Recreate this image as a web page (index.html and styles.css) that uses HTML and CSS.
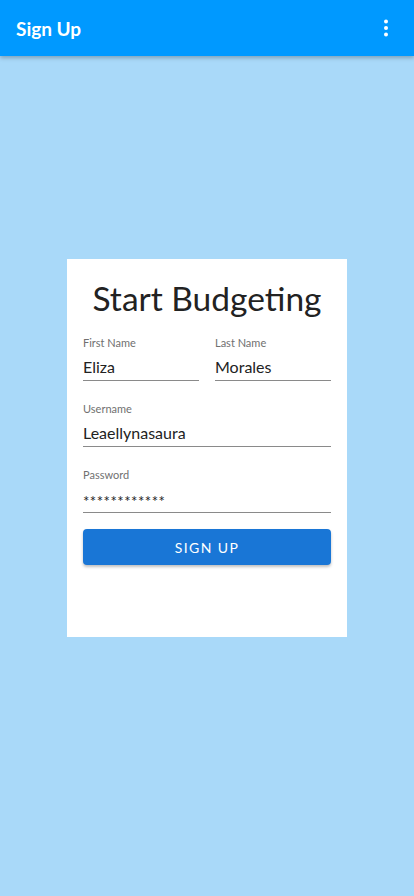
FILE: index.html
```html
<!DOCTYPE html>
<html>
<head>
<meta charset="utf-8">
<link rel="stylesheet" href="styles.css">
</head>
<body>
<header class="appbar">
  <h1 class="appbar-title">Sign Up</h1>
  <button class="menu-btn" aria-label="More">
    <svg width="24" height="24" viewBox="0 0 24 24"><circle cx="12" cy="5.5" r="2" fill="#fff"/><circle cx="12" cy="12" r="2" fill="#fff"/><circle cx="12" cy="18.5" r="2" fill="#fff"/></svg>
  </button>
</header>
<main class="content">
  <form class="card">
    <h2 class="card-title">Start Budgeting</h2>
    <div class="row">
      <label class="field">
        <span class="label">First Name</span>
        <span class="value">Eliza</span>
      </label>
      <label class="field">
        <span class="label">Last Name</span>
        <span class="value">Morales</span>
      </label>
    </div>
    <label class="field">
      <span class="label">Username</span>
      <span class="value">Leaellynasaura</span>
    </label>
    <label class="field">
      <span class="label">Password</span>
      <span class="value password">************</span>
    </label>
    <button type="button" class="submit">SIGN UP</button>
  </form>
</main>
</body>
</html>
```

FILE: styles.css
```css
* { box-sizing: border-box; }
html, body { margin: 0; padding: 0; }
body {
  width: 414px;
  height: 896px;
  background: #a9d9f9;
  font-family: Lato, "Open Sans", sans-serif;
  overflow: hidden;
}
.appbar {
  height: 56px;
  background: #0099ff;
  display: flex;
  align-items: center;
  justify-content: space-between;
  padding: 0 16px;
  box-shadow: 0 2px 4px rgba(0,0,0,0.25);
  position: relative;
}
.appbar-title {
  margin: 0;
  color: #fff;
  font-size: 19px;
  font-weight: 700;
}
.menu-btn {
  background: none;
  border: 0;
  padding: 0;
  display: flex;
}
.content {
  display: flex;
  justify-content: center;
  padding-top: 203px;
}
.card {
  width: 280px;
  height: 378px;
  background: #fff;
  padding: 18px 16px 0;
  display: flex;
  flex-direction: column;
}
.card-title {
  margin: 0 0 17px;
  text-align: center;
  font-weight: 400;
  font-size: 33.5px;
  line-height: 42px;
  color: #222;
}
.row {
  display: flex;
  gap: 16px;
}
.row .field { flex: 1; }
.field {
  display: flex;
  flex-direction: column;
  border-bottom: 1px solid #8a8a8a;
  margin-bottom: 21px;
}
.label {
  font-size: 11px;
  color: #707070;
  line-height: 14px;
}
.value {
  font-size: 16px;
  color: #222;
  line-height: 22px;
  padding: 6px 0 2px;
}
.value.password {
  font-size: 15px;
  letter-spacing: 0.5px;
  padding: 8px 0 0;
}
.submit {
  height: 36px;
  margin-top: -5px;
  border: 0;
  border-radius: 4px;
  background: #1976d6;
  color: #fff;
  font-family: inherit;
  font-size: 14px;
  font-weight: 400;
  letter-spacing: 1.4px;
  box-shadow: 0 2px 3px rgba(0,0,0,0.25);
}
```
